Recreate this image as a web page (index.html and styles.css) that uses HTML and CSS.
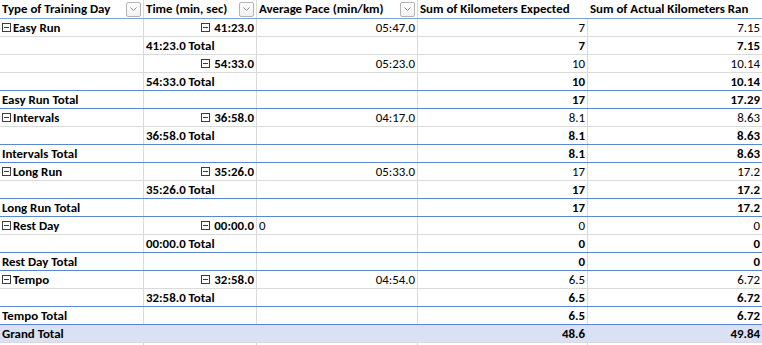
FILE: index.html
```html
<!DOCTYPE html>
<html>
<head>
<meta charset="utf-8">
<link rel="stylesheet" href="styles.css">
</head>
<body>
<div class="pivot">
  <div class="row head">
    <div class="c">Type of Training Day<span class="dd"><svg width="7" height="4" viewBox="0 0 7 4"><path d="M0.5 0.5 L3.5 3.5 L6.5 0.5" fill="none" stroke="#8a8a8a" stroke-width="1"/></svg></span></div>
    <div class="c">Time (min, sec)<span class="dd"><svg width="7" height="4" viewBox="0 0 7 4"><path d="M0.5 0.5 L3.5 3.5 L6.5 0.5" fill="none" stroke="#8a8a8a" stroke-width="1"/></svg></span></div>
    <div class="c">Average Pace (min/km)<span class="dd"><svg width="7" height="4" viewBox="0 0 7 4"><path d="M0.5 0.5 L3.5 3.5 L6.5 0.5" fill="none" stroke="#8a8a8a" stroke-width="1"/></svg></span></div>
    <div class="c">Sum of Kilometers Expected</div>
    <div class="c">Sum of Actual Kilometers Ran</div>
  </div>

  <div class="row">
    <div class="c b"><span class="mb"></span>Easy Run</div>
    <div class="c b r"><span class="mb sp"></span>41:23.0</div>
    <div class="c r">05:47.0</div>
    <div class="c r">7</div>
    <div class="c r">7.15</div>
  </div>
  <div class="row">
    <div class="c"></div>
    <div class="c b">41:23.0 Total</div>
    <div class="c"></div>
    <div class="c r b">7</div>
    <div class="c r b">7.15</div>
  </div>
  <div class="row">
    <div class="c"></div>
    <div class="c b r"><span class="mb sp"></span>54:33.0</div>
    <div class="c r">05:23.0</div>
    <div class="c r">10</div>
    <div class="c r">10.14</div>
  </div>
  <div class="row">
    <div class="c"></div>
    <div class="c b">54:33.0 Total</div>
    <div class="c"></div>
    <div class="c r b">10</div>
    <div class="c r b">10.14</div>
  </div>
  <div class="row blue">
    <div class="c b">Easy Run Total</div>
    <div class="c"></div>
    <div class="c"></div>
    <div class="c r b">17</div>
    <div class="c r b">17.29</div>
  </div>

  <div class="row blue">
    <div class="c b"><span class="mb"></span>Intervals</div>
    <div class="c b r"><span class="mb sp"></span>36:58.0</div>
    <div class="c r">04:17.0</div>
    <div class="c r">8.1</div>
    <div class="c r">8.63</div>
  </div>
  <div class="row">
    <div class="c"></div>
    <div class="c b">36:58.0 Total</div>
    <div class="c"></div>
    <div class="c r b">8.1</div>
    <div class="c r b">8.63</div>
  </div>
  <div class="row blue">
    <div class="c b">Intervals Total</div>
    <div class="c"></div>
    <div class="c"></div>
    <div class="c r b">8.1</div>
    <div class="c r b">8.63</div>
  </div>

  <div class="row blue">
    <div class="c b"><span class="mb"></span>Long Run</div>
    <div class="c b r"><span class="mb sp"></span>35:26.0</div>
    <div class="c r">05:33.0</div>
    <div class="c r">17</div>
    <div class="c r">17.2</div>
  </div>
  <div class="row">
    <div class="c"></div>
    <div class="c b">35:26.0 Total</div>
    <div class="c"></div>
    <div class="c r b">17</div>
    <div class="c r b">17.2</div>
  </div>
  <div class="row blue">
    <div class="c b">Long Run Total</div>
    <div class="c"></div>
    <div class="c"></div>
    <div class="c r b">17</div>
    <div class="c r b">17.2</div>
  </div>

  <div class="row blue">
    <div class="c b"><span class="mb"></span>Rest Day</div>
    <div class="c b r"><span class="mb sp"></span>00:00.0</div>
    <div class="c">0</div>
    <div class="c r">0</div>
    <div class="c r">0</div>
  </div>
  <div class="row">
    <div class="c"></div>
    <div class="c b">00:00.0 Total</div>
    <div class="c"></div>
    <div class="c r b">0</div>
    <div class="c r b">0</div>
  </div>
  <div class="row blue">
    <div class="c b">Rest Day Total</div>
    <div class="c"></div>
    <div class="c"></div>
    <div class="c r b">0</div>
    <div class="c r b">0</div>
  </div>

  <div class="row blue">
    <div class="c b"><span class="mb"></span>Tempo</div>
    <div class="c b r"><span class="mb sp"></span>32:58.0</div>
    <div class="c r">04:54.0</div>
    <div class="c r">6.5</div>
    <div class="c r">6.72</div>
  </div>
  <div class="row">
    <div class="c"></div>
    <div class="c b">32:58.0 Total</div>
    <div class="c"></div>
    <div class="c r b">6.5</div>
    <div class="c r b">6.72</div>
  </div>
  <div class="row blue">
    <div class="c b">Tempo Total</div>
    <div class="c"></div>
    <div class="c"></div>
    <div class="c r b">6.5</div>
    <div class="c r b">6.72</div>
  </div>

  <div class="row blue grand">
    <div class="c b">Grand Total</div>
    <div class="c"></div>
    <div class="c"></div>
    <div class="c r b">48.6</div>
    <div class="c r b">49.84</div>
  </div>
  <div class="row tail">
    <div class="c"></div>
    <div class="c"></div>
    <div class="c"></div>
    <div class="c"></div>
    <div class="c"></div>
  </div>
</div>
</body>
</html>
```
FILE: styles.css
```css
html, body {
  margin: 0;
  padding: 0;
  background: #ffffff;
}

body {
  font-family: Carlito, Lato, "Liberation Sans", sans-serif;
  font-size: 12.9px;
  color: #000000;
  overflow: hidden;
}

.pivot {
  width: 762px;
}

.row {
  display: grid;
  grid-template-columns: 144px 113px 161px 170px 174px;
  height: 18px;
  box-sizing: border-box;
  border-top: 1px solid #dadada;
}

.row.head {
  border-top: none;
  font-weight: bold;
}

.row.blue {
  border-top-color: #5b86d0;
}

.row.head + .row {
  border-top-color: #7fa0da;
}

.c {
  box-sizing: border-box;
  border-right: 1px solid #dadada;
  display: flex;
  align-items: center;
  padding: 0 2px 0 2px;
  white-space: nowrap;
  overflow: hidden;
  line-height: 17px;
}

.row.head .c {
  line-height: 18px;
}

.row.head .c:nth-child(4) {
  border-right-color: transparent;
}

.c:last-child {
  border-right: none;
}

.c.r {
  justify-content: flex-end;
}

.c.b {
  font-weight: bold;
}

.grand {
  background: #d9e1f2;
}

.grand .c {
  border-right-color: transparent;
}

.dd {
  margin-left: auto;
  width: 15px;
  height: 15px;
  box-sizing: border-box;
  border: 1px solid #b4b4b4;
  border-radius: 2px;
  background: linear-gradient(#ffffff, #f1f1f1);
  display: flex;
  align-items: center;
  justify-content: center;
  flex: none;
}

.mb {
  width: 9px;
  height: 9px;
  box-sizing: border-box;
  border: 1px solid #3c3c3c;
  position: relative;
  flex: none;
  margin-right: 2px;
}

.mb::after {
  content: "";
  position: absolute;
  left: 1px;
  right: 1px;
  top: 3px;
  height: 1px;
  background: #3c3c3c;
}

.mb.sp {
  margin-right: 4px;
}
```
